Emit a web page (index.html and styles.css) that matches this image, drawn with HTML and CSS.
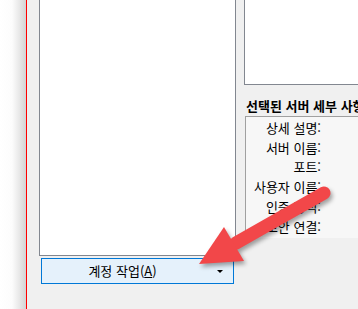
FILE: index.html
```html
<!DOCTYPE html>
<html lang="ko">

<head>
  <meta charset="UTF-8">
  <meta name="viewport" content="width=device-width, initial-scale=1.0">
  <title>계정 설정</title>
  <link rel="stylesheet" href="styles.css">
</head>

<body>
  <div class="screen">
    <div class="winShadow"></div>
    <div class="redLine"></div>
    <div class="dialog">
      <!-- 왼쪽: 서버 목록 -->
      <div class="leftCol">
        <div class="serverList"></div>
        <div class="accountBt">
          <span class="btText">계정 작업(<u>A</u>)</span>
          <span class="dropArr"></span>
        </div>
      </div>
      <!-- 오른쪽: 세부 사항 -->
      <div class="rightCol">
        <div class="topBox"></div>
        <div class="groupTitle">선택된 서버 세부 사항</div>
        <div class="detailBox">
          <div class="row">상세 설명:</div>
          <div class="row">서버 이름:</div>
          <div class="row">포트:</div>
          <div class="row">사용자 이름:</div>
          <div class="row">인증 방식:</div>
          <div class="row">보안 연결:</div>
        </div>
      </div>
    </div>
    <svg class="callout" width="358" height="309" viewBox="0 0 358 309">
      <g class="arrowShape">
        <line x1="324" y1="193" x2="236" y2="243" stroke="#f24749" stroke-width="13" stroke-linecap="round" />
        <polygon points="199,264 224,227 244,261" fill="#f24749" />
      </g>
    </svg>
  </div>
</body>

</html>
```

FILE: styles.css
```css
html,
body {
  margin: 0;
  padding: 0;
}

body {
  width: 358px;
  height: 309px;
  overflow: hidden;
  background: #f0f0f0;
  font-family: "Noto Sans CJK KR", "Noto Sans", sans-serif;
  font-size: 13px;
  color: #000;
}

.screen {
  position: relative;
  display: flex;
  height: 309px;
}

.winShadow {
  width: 26px;
  flex-shrink: 0;
  background: linear-gradient(to right, #fff 0, #fcfcfc 12px, #e6e6e6 20px, #d4d4d4 26px);
}

.redLine {
  width: 1px;
  flex-shrink: 0;
  background: #ff0000;
}

.dialog {
  display: flex;
  flex: 1;
  min-width: 0;
  padding-left: 12px;
  gap: 8px;
}

.leftCol {
  width: 197px;
  flex-shrink: 0;
  display: flex;
  flex-direction: column;
}

.serverList {
  height: 255px;
  background: #fff;
  border: 1px solid #828790;
  border-top: none;
}

.accountBt {
  margin: 2px 0 0 2px;
  width: 191px;
  height: 24px;
  background: #e5f1fb;
  border: 1px solid #0078d7;
  display: flex;
  align-items: center;
  position: relative;
}

.btText {
  flex: 1;
  text-align: center;
  padding-right: 14px;
  line-height: 24px;
}

.btText u {
  text-underline-offset: 1px;
}

.dropArr {
  width: 0;
  height: 0;
  border-left: 3px solid transparent;
  border-right: 3px solid transparent;
  border-top: 3px solid #000;
  margin-right: 10px;
}

.rightCol {
  flex: 1;
  display: flex;
  flex-direction: column;
  min-width: 0;
  overflow: hidden;
}

.topBox {
  height: 84px;
  background: #fff;
  border: 1px solid #828790;
  border-top: none;
  border-right: none;
}

.groupTitle {
  margin: 10px 0 0 2px;
  font-weight: bold;
  white-space: nowrap;
  line-height: 21px;
}

.detailBox {
  margin-left: 1px;
  height: 120px;
  background: #f7f7f7;
  border-top: 1px solid #a0a0a0;
  border-left: 1px solid #a0a0a0;
  padding-top: 1px;
}

.row {
  width: 75px;
  text-align: right;
  line-height: 19.7px;
  white-space: nowrap;
}

.callout {
  position: absolute;
  left: 0;
  top: 0;
  pointer-events: none;
}

.arrowShape {
  filter: drop-shadow(2px 3px 2px rgba(0, 0, 0, 0.35));
}
```
